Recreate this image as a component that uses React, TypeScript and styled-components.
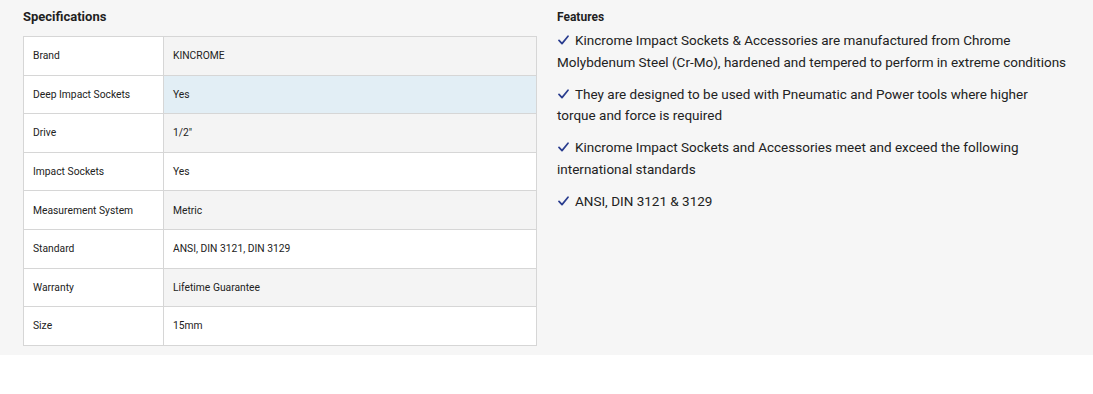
import React from "react";
import styled, { createGlobalStyle } from "styled-components";

const Global = createGlobalStyle`
  html, body { margin: 0; padding: 0; background: #ffffff; }
  body { font-family: Roboto, "Liberation Sans", Arial, sans-serif; color: #222; }
`;

const Section = styled.section`
  background: #f6f6f6;
  height: 355px;
  box-sizing: border-box;
  padding: 8px 23px 0 23px;
  display: grid;
  grid-template-columns: 514px 513px;
  column-gap: 20px;
  align-items: start;
`;

const Column = styled.div`
  display: flex;
  flex-direction: column;
`;

const SpecTitle = styled.h3`
  margin: 0;
  font-size: 13px;
  font-weight: 700;
  line-height: 18px;
  color: #1f1f1f;
  height: 28px;
`;

const FeatTitle = styled.h3`
  margin: 0;
  font-size: 12px;
  font-weight: 700;
  line-height: 18px;
  color: #1f1f1f;
  height: 22px;
`;

const Table = styled.table`
  width: 514px;
  border-collapse: collapse;
  font-size: 10.3px;
  color: #222;
`;

const Row = styled.tr``;

const LabelCell = styled.td`
  width: 140px;
  box-sizing: border-box;
  height: 37.6px;
  padding: 0 9px;
  border: 1px solid #d6d6d6;
  background: #ffffff;
`;

const ValueCell = styled.td<{ $bg: string }>`
  height: 37.6px;
  padding: 0 9px;
  border: 1px solid #d6d6d6;
  background: ${(p) => p.$bg};
`;

const Feature = styled.p`
  margin: 0 0 10.5px 0;
  max-width: 511px;
  font-size: 13.5px;
  line-height: 21.5px;
  color: #222;
`;

const CheckIcon = styled.svg`
  width: 11px;
  height: 10px;
  margin: 0 6px 0 1px;
  vertical-align: 0px;
`;

const Check = () => (
  <CheckIcon viewBox="0 0 11 10" aria-hidden="true">
    <path d="M1 5.4 L4 8.6 L10 1.2" fill="none" stroke="#2a3d8f" strokeWidth="1.7" strokeLinecap="round" strokeLinejoin="round" />
  </CheckIcon>
);

const specs: [string, string][] = [
  ["Brand", "KINCROME"],
  ["Deep Impact Sockets", "Yes"],
  ["Drive", "1/2\""],
  ["Impact Sockets", "Yes"],
  ["Measurement System", "Metric"],
  ["Standard", "ANSI, DIN 3121, DIN 3129"],
  ["Warranty", "Lifetime Guarantee"],
  ["Size", "15mm"],
];

const features = [
  "Kincrome Impact Sockets & Accessories are manufactured from Chrome Molybdenum Steel (Cr-Mo), hardened and tempered to perform in extreme conditions",
  "They are designed to be used with Pneumatic and Power tools where higher torque and force is required",
  "Kincrome Impact Sockets and Accessories meet and exceed the following international standards",
  "ANSI, DIN 3121 & 3129",
];

function valueBg(i: number) {
  if (i === 1) return "#e2eef5";
  return i % 2 === 0 ? "#f4f4f4" : "#ffffff";
}

export default function App() {
  return (
    <>
      <Global />
      <Section>
        <Column>
          <SpecTitle>Specifications</SpecTitle>
          <Table>
            <tbody>
              {specs.map(([k, v], i) => (
                <Row key={k}>
                  <LabelCell>{k}</LabelCell>
                  <ValueCell $bg={valueBg(i)}>{v}</ValueCell>
                </Row>
              ))}
            </tbody>
          </Table>
        </Column>
        <Column>
          <FeatTitle>Features</FeatTitle>
          {features.map((f) => (
            <Feature key={f}>
              <Check />
              {f}
            </Feature>
          ))}
        </Column>
      </Section>
    </>
  );
}
